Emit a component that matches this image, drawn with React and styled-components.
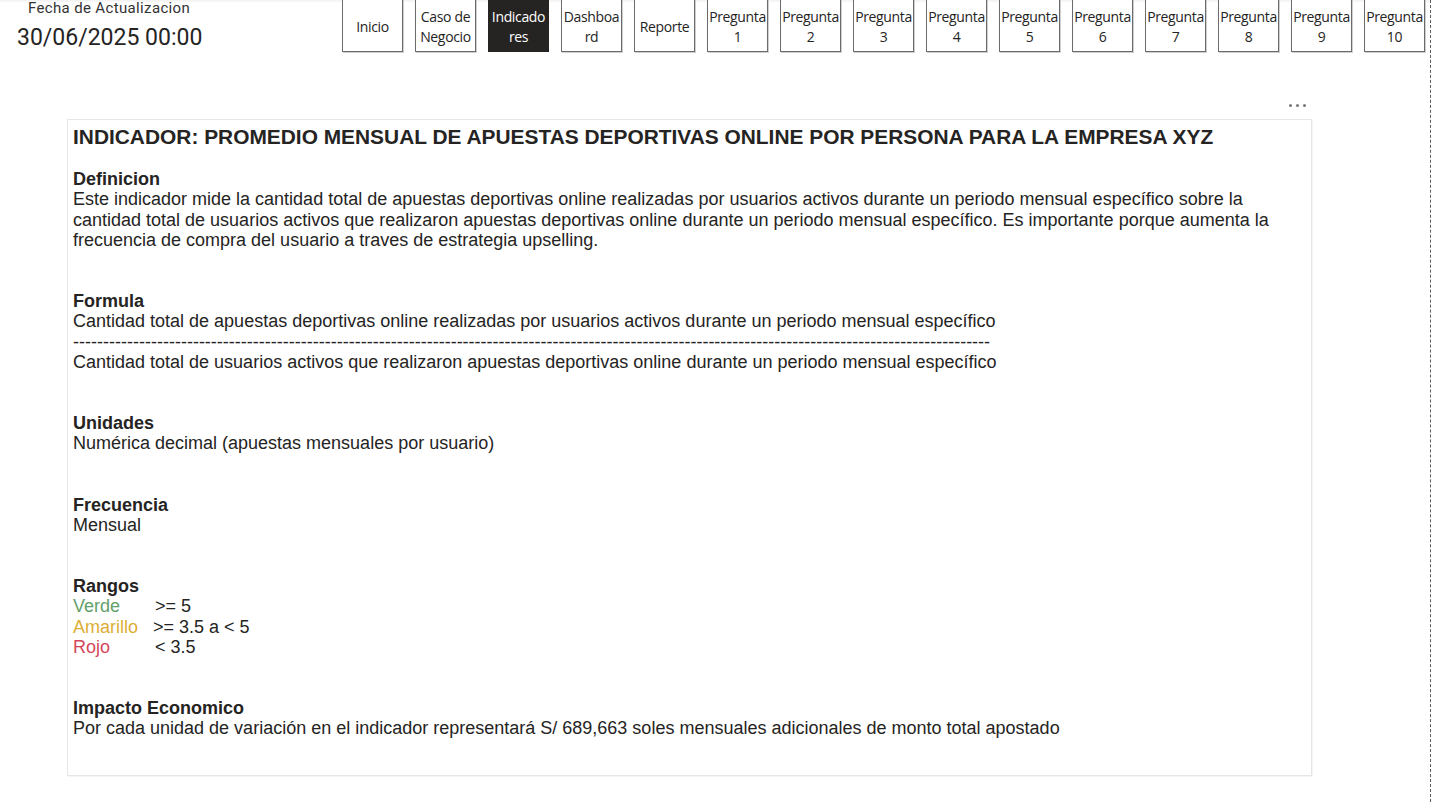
import React from 'react';
import styled, { createGlobalStyle } from 'styled-components';

const GlobalStyle = createGlobalStyle`
  html, body {
    margin: 0;
    padding: 0;
    background: #ffffff;
  }
`;

const NAV_ITEMS = [
  ['Inicio'],
  ['Caso de', 'Negocio'],
  ['Indicado', 'res'],
  ['Dashboa', 'rd'],
  ['Reporte'],
  ...Array.from({ length: 10 }, (_, i) => ['Pregunta', String(i + 1)]),
];

const ACTIVE = 2;

const DASHES = '-'.repeat(153);

const Page = styled.div`
  position: relative;
  width: 1431px;
  height: 802px;
  box-sizing: border-box;
  border-right: 1px dashed #5a5a5a;
  overflow: hidden;
  font-family: 'Liberation Sans', Arial, sans-serif;
  color: #252423;
`;

const TopBar = styled.div`
  display: flex;
  align-items: flex-start;
  height: 60px;
  box-shadow: inset 0 3px 3px -2px rgba(0, 0, 0, 0.08);
`;

const DateBlock = styled.div`
  width: 342px;
  display: flex;
  flex-direction: column;
  padding-left: 17px;
  box-sizing: border-box;
`;

const DateLabel = styled.div`
  font-family: Roboto, 'Noto Sans', sans-serif;
  font-size: 15px;
  letter-spacing: 0.35px;
  color: #333333;
  margin-left: 11px;
  line-height: 16px;
`;

const DateValue = styled.div`
  font-family: Roboto, 'Noto Sans', sans-serif;
  font-size: 23px;
  color: #252423;
  margin-top: 8px;
  line-height: 28px;
`;

const Nav = styled.nav`
  display: flex;
  gap: 12px;
  margin-top: -3px;
`;

const NavButton = styled.div`
  width: 61px;
  height: 55px;
  box-sizing: border-box;
  display: flex;
  flex-direction: column;
  align-items: center;
  justify-content: center;
  padding-top: 5px;
  font-family: 'Open Sans', 'Noto Sans', sans-serif;
  font-size: 14px;
  letter-spacing: -0.35px;
  line-height: 20px;
  text-align: center;
  white-space: nowrap;
  background: ${(p) => (p.$active ? '#252423' : '#ffffff')};
  color: ${(p) => (p.$active ? '#ffffff' : '#252423')};
  border: 1px solid ${(p) => (p.$active ? '#252423' : '#6b6b6b')};
  box-shadow: ${(p) => (p.$active ? 'none' : '1px 1px 0 #cfcfcf')};
`;

const CardArea = styled.div`
  width: 1245px;
  margin: 32px 0 0 67px;
  display: flex;
  flex-direction: column;
`;

const CardHeader = styled.div`
  height: 27px;
  display: flex;
  justify-content: flex-end;
  align-items: center;
  padding-right: 6px;
`;

const Dots = styled.div`
  display: flex;
  gap: 4px;
  span {
    width: 3px;
    height: 3px;
    border-radius: 50%;
    background: #777;
  }
`;

const Card = styled.div`
  height: 657px;
  box-sizing: border-box;
  border: 1px solid #e6e6e6;
  box-shadow: 1px 1px 1px rgba(0, 0, 0, 0.04);
  padding: 6px 5px;
  font-size: 18px;
  line-height: 20.35px;
`;

const Title = styled.div`
  font-weight: bold;
  font-size: 20.9px;
  line-height: 22px;
  margin-bottom: 21px;
`;

const Heading = styled.div`
  font-weight: bold;
`;

const Line = styled.div`
  white-space: pre;
  color: ${(p) => p.$color || '#252423'};
`;

const Section = styled.div`
  margin-bottom: ${(p) => p.$gap || 40.7}px;
`;

const Tone = styled.span`
  color: ${(p) => p.$color};
`;

export default function App() {
  return (
    <Page>
      <GlobalStyle />
      <TopBar>
        <DateBlock>
          <DateLabel>Fecha de Actualizacion</DateLabel>
          <DateValue>30/06/2025 00:00</DateValue>
        </DateBlock>
        <Nav>
          {NAV_ITEMS.map((lines, i) => (
            <NavButton key={i} $active={i === ACTIVE}>
              {lines.map((l) => (
                <span key={l}>{l}</span>
              ))}
            </NavButton>
          ))}
        </Nav>
      </TopBar>

      <CardArea>
        <CardHeader>
          <Dots>
            <span />
            <span />
            <span />
          </Dots>
        </CardHeader>
        <Card>
          <Title>
            INDICADOR: PROMEDIO MENSUAL DE APUESTAS DEPORTIVAS ONLINE POR PERSONA PARA LA EMPRESA XYZ
          </Title>

          <Section>
            <Heading>Definicion</Heading>
            <div>
              Este indicador mide la cantidad total de apuestas deportivas online realizadas por
              usuarios activos durante un periodo mensual específico sobre la
              <br />
              cantidad total de usuarios activos que realizaron apuestas deportivas online durante un
              periodo mensual específico. Es importante porque aumenta la
              <br />
              frecuencia de compra del usuario a traves de estrategia upselling.
            </div>
          </Section>

          <Section>
            <Heading>Formula</Heading>
            <Line>
              Cantidad total de apuestas deportivas online realizadas por usuarios activos durante un periodo mensual específico
            </Line>
            <Line>{DASHES}</Line>
            <Line>
              Cantidad total de usuarios activos que realizaron apuestas deportivas online durante un periodo mensual específico
            </Line>
          </Section>

          <Section>
            <Heading>Unidades</Heading>
            <Line>Numérica decimal (apuestas mensuales por usuario)</Line>
          </Section>

          <Section>
            <Heading>Frecuencia</Heading>
            <Line>Mensual</Line>
          </Section>

          <Section>
            <Heading>Rangos</Heading>
            <Line>
              <Tone $color="#62a06a">Verde</Tone>
              {'       >= 5'}
            </Line>
            <Line>
              <Tone $color="#dcae35">Amarillo</Tone>
              {'   >= 3.5 a < 5'}
            </Line>
            <Line>
              <Tone $color="#d4475a">Rojo</Tone>
              {'         < 3.5'}
            </Line>
          </Section>

          <Section>
            <Heading>Impacto Economico</Heading>
            <Line>
              Por cada unidad de variación en el indicador representará S/ 689,663 soles mensuales
              adicionales de monto total apostado
            </Line>
          </Section>
        </Card>
      </CardArea>
    </Page>
  );
}
